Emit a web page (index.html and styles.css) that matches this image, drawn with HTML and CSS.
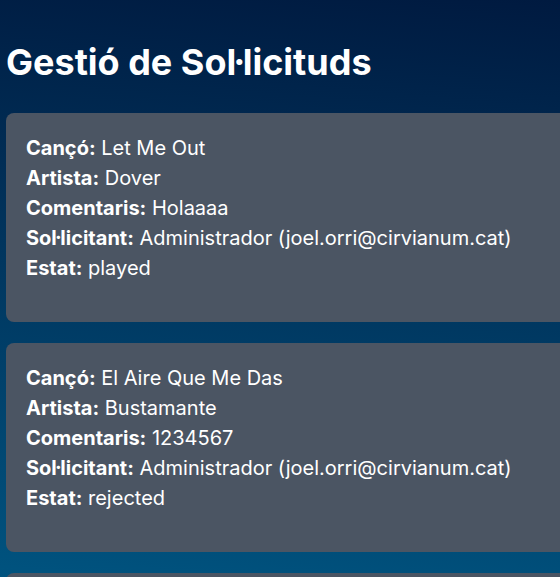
FILE: index.html
```html
<!DOCTYPE html>
<html lang="ca">
<head>
<meta charset="utf-8">
<link rel="stylesheet" href="styles.css">
</head>
<body>
<main class="page">
  <h1 class="title">Gestió de Sol·licituds</h1>
  <div class="list">
    <div class="card">
      <p><strong>Cançó:</strong> Let Me Out</p>
      <p><strong>Artista:</strong> Dover</p>
      <p><strong>Comentaris:</strong> Holaaaa</p>
      <p><strong>Sol·licitant:</strong> Administrador (joel.orri@cirvianum.cat)</p>
      <p><strong>Estat:</strong> played</p>
    </div>
    <div class="card">
      <p><strong>Cançó:</strong> El Aire Que Me Das</p>
      <p><strong>Artista:</strong> Bustamante</p>
      <p><strong>Comentaris:</strong> 1234567</p>
      <p><strong>Sol·licitant:</strong> Administrador (joel.orri@cirvianum.cat)</p>
      <p><strong>Estat:</strong> rejected</p>
    </div>
    <div class="card card-empty"></div>
  </div>
</main>
</body>
</html>
```
FILE: styles.css
```css
html, body {
  margin: 0;
  padding: 0;
}
body {
  height: 577px;
  overflow: hidden;
  background: linear-gradient(185deg, #001a40 0%, #00537f 100%);
  font-family: Inter, "Noto Sans", sans-serif;
  color: #ffffff;
}
.page {
  padding: 0 0 0 6px;
  width: 640px;
}
.title {
  margin: 0;
  padding-top: 40px;
  font-size: 36px;
  line-height: 44px;
  font-weight: 700;
}
.list {
  margin-top: 29px;
  display: flex;
  flex-direction: column;
  gap: 21px;
}
.card {
  background: #4b5563;
  border-radius: 8px;
  padding: 20px 20px 39px 20px;
}
.card-empty {
  height: 40px;
}
.card p {
  margin: 0;
  font-size: 20px;
  line-height: 30px;
}
.card strong {
  font-weight: 700;
}
```
